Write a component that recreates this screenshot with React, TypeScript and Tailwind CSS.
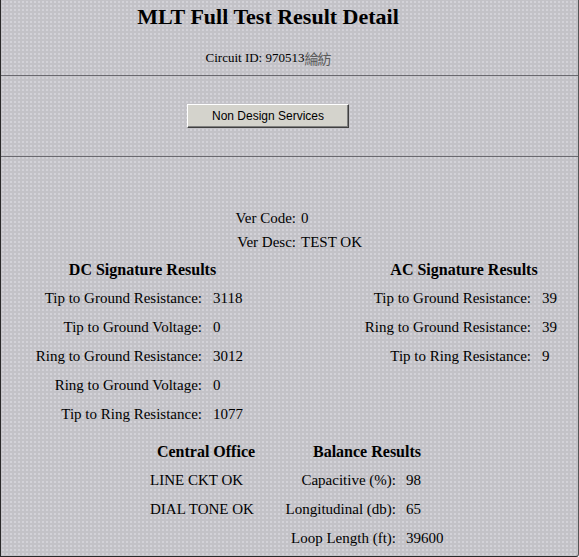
import React from "react";

const serif = "font-['Liberation_Serif','Times_New_Roman',serif]";

function Row({ label, value, labelW, valW }: { label: string; value: string; labelW: string; valW: string }) {
  return (
    <div className="flex h-[29px] items-center">
      <div className={`${labelW} text-right`}>{label}</div>
      <div className={`${valW} pl-[11px] text-left`}>{value}</div>
    </div>
  );
}

export default function App() {
  const dc = [
    ["Tip to Ground Resistance:", "3118"],
    ["Tip to Ground Voltage:", "0"],
    ["Ring to Ground Resistance:", "3012"],
    ["Ring to Ground Voltage:", "0"],
    ["Tip to Ring Resistance:", "1077"],
  ];
  const ac = [
    ["Tip to Ground Resistance:", "39"],
    ["Ring to Ground Resistance:", "39"],
    ["Tip to Ring Resistance:", "9"],
  ];
  const bal = [
    ["Capacitive (%):", "98"],
    ["Longitudinal (db):", "65"],
    ["Loop Length (ft):", "39600"],
  ];
  return (
    <div
      className={`${serif} w-[579px] h-[557px] overflow-hidden bg-[#c3c2c7] bg-[radial-gradient(circle,#d3d2d8_0.8px,transparent_1px)] bg-[length:4px_4px] text-[15px] text-black border-l border-r border-b border-l-[#2a2a2a] border-r-[#555] border-b-[#2a2a2a] rounded-br-[3px]`}
    >
      {/* Section 1 */}
      <div className="h-[76px] border-b border-[#6b6a70] flex flex-col items-center pr-[43px]">
        <div className="h-[33px] flex items-center text-[22px] font-bold leading-none">
          MLT Full Test Result Detail
        </div>
        <div className="mt-[13px] h-[24px] flex items-center text-[13px]">
          Circuit ID: 970513
          <span className="text-[#5a5a5a] text-[14px] font-['Noto_Sans_CJK_SC',sans-serif] tracking-[-1px]">綸紡</span>
        </div>
      </div>

      {/* Section 2 */}
      <div className="h-[81px] border-b border-[#6b6a70] flex justify-center pt-[28px] pr-[43px]">
        <button
          className="w-[162px] h-[24px] bg-[#d4d3cc] border border-t-white border-l-white border-r-[#404040] border-b-[#404040] shadow-[inset_-1px_-1px_0_#808080] font-['Liberation_Sans',Arial,sans-serif] text-[12px] text-black flex items-center justify-center"
        >
          Non Design Services
        </button>
      </div>

      {/* Section 3 */}
      <div className="pt-[49px]">
        <div className="ml-[225px]">
          <div className="flex h-[24px] items-center">
            <div className="w-[70px] text-right">Ver Code:</div>
            <div className="pl-[5px]">0</div>
          </div>
          <div className="flex h-[24px] items-center">
            <div className="w-[70px] text-right">Ver Desc:</div>
            <div className="pl-[5px]">TEST OK</div>
          </div>
        </div>

        <div className="flex mt-[1px]">
          <div className="ml-[31px] w-[221px]">
            <div className="h-[29px] flex items-center justify-center font-bold text-[16px]">DC Signature Results</div>
            {dc.map(([l, v]) => (
              <Row key={l} label={l} value={v} labelW="w-[170px]" valW="w-[51px]" />
            ))}
          </div>
          <div className="ml-[108px] w-[206px]">
            <div className="h-[29px] flex items-center justify-center font-bold text-[16px]">AC Signature Results</div>
            {ac.map(([l, v]) => (
              <Row key={l} label={l} value={v} labelW="w-[170px]" valW="w-[36px]" />
            ))}
          </div>
        </div>

        <div className="flex mt-[8px] ml-[145px]">
          <div className="w-[120px]">
            <div className="h-[29px] flex items-center justify-center font-bold text-[16px]">Central Office</div>
            <div className="h-[29px] flex items-center pl-[4px]">LINE CKT OK</div>
            <div className="h-[29px] flex items-center pl-[4px]">DIAL TONE OK</div>
          </div>
          <div className="ml-[19px] w-[164px]">
            <div className="h-[29px] flex items-center justify-center font-bold text-[16px]">Balance Results</div>
            {bal.map(([l, v]) => (
              <div key={l} className="flex h-[29px] items-center">
                <div className="w-[111px] text-right">{l}</div>
                <div className="w-[53px] pl-[10px]">{v}</div>
              </div>
            ))}
          </div>
        </div>
      </div>
    </div>
  );
}
